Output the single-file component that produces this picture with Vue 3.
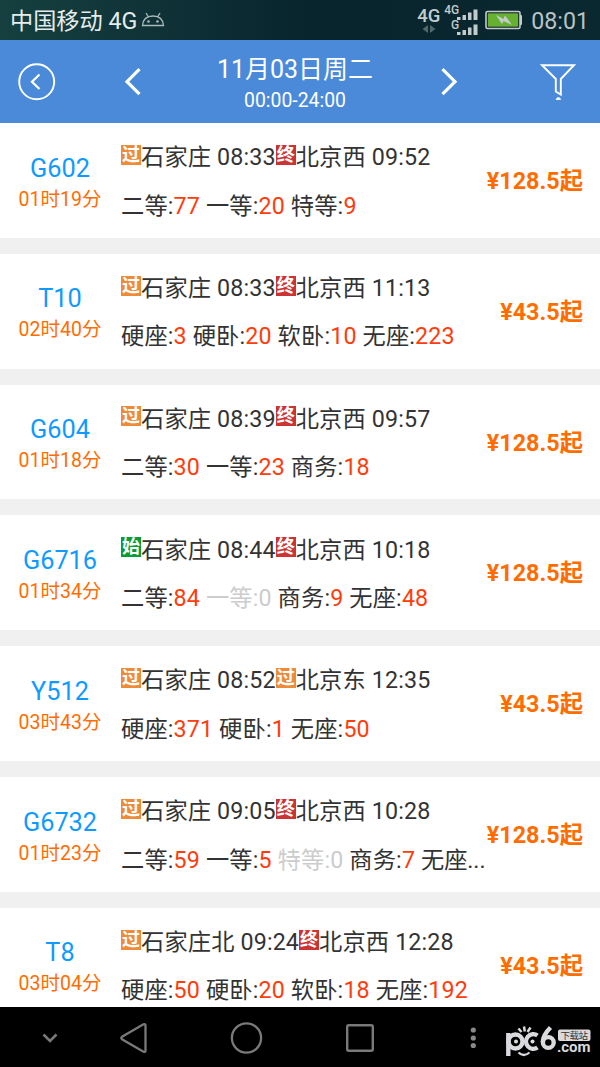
<template>
  <div class="app">
    <div class="status-bar">
      <span class="carrier">中国移动 4G</span>
      <svg class="android" width="24" height="16" viewBox="0 0 24 16">
        <path d="M1.500 13.500C2 7.500 6 4 12 4S22 7.500 22.500 13.500Z" />
        <path d="M5 1L7.500 5M19 1L16.500 5" />
        <circle cx="7.500" cy="9.500" r="0.700" />
        <circle cx="16.500" cy="9.500" r="0.700" />
      </svg>
      <div class="net">
        <span class="net-type">4G</span>
        <svg width="14" height="8" viewBox="0 0 14 8">
          <path d="M6 0V8L0.500 4ZM8 0V8L13.500 4Z" fill="#51686d" />
        </svg>
      </div>
      <div class="signals">
        <div class="signal" v-for="name in ['4G', 'G']" :key="name">
          <span>{{ name }}</span>
          <svg width="21" height="12" viewBox="0 0 21 12">
            <path d="M0 9h3.500v3H0ZM5.500 7H9v5H5.500ZM11 4.500h3.500V12H11ZM16.500 1.500H20.500V12H16.500Z" fill="#c3cccd" />
          </svg>
        </div>
      </div>
      <svg class="battery" width="38" height="20" viewBox="0 0 38 20">
        <rect x="1" y="1.500" width="34" height="17" rx="1.500" fill="#122126" stroke="#c3cccd" stroke-width="1.600" />
        <rect x="2.800" y="3.300" width="30.400" height="13.400" fill="#67b132" />
        <path d="M35.500 5.500H36.500V14.500H35.500Z" fill="#c3cccd" stroke="#c3cccd" />
        <path d="M11 5L18.500 9L20 5.500L27 15L18.500 11L17 14Z" fill="#c3cccd" />
      </svg>
      <span class="clock">08:01</span>
    </div>

    <div class="header">
      <button class="back">
        <svg width="38" height="38" viewBox="0 0 38 38">
          <circle cx="18.700" cy="18.700" r="17.500" stroke-width="1.900" />
          <path d="M21.500 11.500L14 18.800L21.500 26" stroke-width="2.300" />
        </svg>
      </button>
      <button class="prev">
        <svg width="20" height="30" viewBox="0 0 20 30">
          <path d="M16.500 2.200L4 14.700L16.500 27.200" stroke-width="3.200" />
        </svg>
      </button>
      <div class="date">
        <div class="day">11月03日周二</div>
        <div class="range">00:00-24:00</div>
      </div>
      <button class="next">
        <svg width="20" height="30" viewBox="0 0 20 30">
          <path d="M3.500 2.200L16 14.700L3.500 27.200" stroke-width="3.200" />
        </svg>
      </button>
      <button class="filter">
        <svg width="38" height="38" viewBox="0 0 38 38">
          <path d="M3 2.200H35L21.800 16V31.500L16.800 28.500V16Z" stroke-width="1.900" />
          <path d="M17.200 36.500C17.200 34 21.500 34 21.500 36.500Z" fill="#fff" stroke-width="0.800" />
        </svg>
      </button>
    </div>

    <div class="list">
      <div class="train" v-for="t in trains" :key="t.no">
        <div class="left">
          <div class="no">{{ t.no }}</div>
          <div class="duration">{{ t.duration }}</div>
        </div>
        <div class="info">
          <div class="stations">
            <i class="tag" :class="tagClass[t.from[0]]">{{ t.from[0] }}</i><span>{{ t.from[1] }}</span><i class="tag" :class="tagClass[t.to[0]]">{{ t.to[0] }}</i><span>{{ t.to[1] }}</span>
          </div>
          <div class="seats">
            <template v-for="s in t.seats" :key="s[0]"><span :class="{ none: s[1] === 0 }">{{ s[0] }}:<b>{{ s[1] }}</b></span>{{ ' ' }}</template>
            <span v-if="t.more" class="more">{{ t.more }}</span>
          </div>
        </div>
        <div class="price">¥{{ t.price }}起</div>
      </div>
    </div>

    <div class="nav-bar">
      <svg class="keys" width="490" height="60" viewBox="0 0 490 60">
        <path d="M43.500 27.500L50 34L56.500 27.500" stroke-width="2.600" />
        <path d="M122 29.800Q120.500 31 122 32.200L143.500 44.700Q145.500 45.500 145.500 43.500V18.500Q145.500 16.500 143.500 17.300Z" stroke-width="2.300" />
        <circle cx="246.500" cy="31" r="14.600" stroke-width="2.300" />
        <rect x="347.200" y="18.200" width="25.600" height="25.600" rx="1.500" stroke-width="2.400" />
        <g class="dots">
          <circle cx="473.300" cy="23" r="2.600" />
          <circle cx="473.300" cy="31" r="2.600" />
          <circle cx="473.300" cy="38.500" r="2.600" />
        </g>
      </svg>
      <svg class="logo" width="90" height="36" viewBox="0 0 90 36">
        <g fill="none" stroke="#d9d9de" stroke-width="4.400">
          <path d="M3.300 7V30" />
          <circle cx="10.500" cy="15.500" r="7" />
          <path d="M32.500 9.500A7.300 7.300 0 1 0 32.500 21.500" />
          <path d="M45.500 1.500C41 6 37.800 11 37.800 16" />
          <circle cx="43.300" cy="16.500" r="5.400" />
          <path d="M13.500 2.500L16.500 6M19 0.500L19.800 5.500M25.500 1.500L22.500 6" stroke-width="2.500" />
          <path d="M13.500 26.500Q18.500 31.500 24.500 26.500" stroke-width="2.200" />
        </g>
        <circle cx="11" cy="15.500" r="2" fill="#ddd" />
        <circle cx="27.500" cy="15.500" r="2" fill="#ddd" />
        <rect x="53" y="3.500" width="32.500" height="11.500" rx="2" fill="#d9d9de" />
        <text class="logo-cn" x="55.500" y="12.700" textLength="27.500">下载站</text>
        <text class="logo-com" x="52" y="25.500" textLength="33.500">.com</text>
      </svg>
    </div>
  </div>
</template>

<script setup>
import { ref } from 'vue';

const tagClass = { 过: 'pass', 终: 'end', 始: 'start' };

const trains = ref([
  {
    no: 'G602', duration: '01时19分', price: '128.5',
    from: ['过', '石家庄 08:33'], to: ['终', '北京西 09:52'],
    seats: [['二等', 77], ['一等', 20], ['特等', 9]],
  },
  {
    no: 'T10', duration: '02时40分', price: '43.5',
    from: ['过', '石家庄 08:33'], to: ['终', '北京西 11:13'],
    seats: [['硬座', 3], ['硬卧', 20], ['软卧', 10], ['无座', 223]],
  },
  {
    no: 'G604', duration: '01时18分', price: '128.5',
    from: ['过', '石家庄 08:39'], to: ['终', '北京西 09:57'],
    seats: [['二等', 30], ['一等', 23], ['商务', 18]],
  },
  {
    no: 'G6716', duration: '01时34分', price: '128.5',
    from: ['始', '石家庄 08:44'], to: ['终', '北京西 10:18'],
    seats: [['二等', 84], ['一等', 0], ['商务', 9], ['无座', 48]],
  },
  {
    no: 'Y512', duration: '03时43分', price: '43.5',
    from: ['过', '石家庄 08:52'], to: ['过', '北京东 12:35'],
    seats: [['硬座', 371], ['硬卧', 1], ['无座', 50]],
  },
  {
    no: 'G6732', duration: '01时23分', price: '128.5',
    from: ['过', '石家庄 09:05'], to: ['终', '北京西 10:28'],
    seats: [['二等', 59], ['一等', 5], ['特等', 0], ['商务', 7]],
    more: '无座...',
  },
  {
    no: 'T8', duration: '03时04分', price: '43.5',
    from: ['过', '石家庄北 09:24'], to: ['终', '北京西 12:28'],
    seats: [['硬座', 50], ['硬卧', 20], ['软卧', 18], ['无座', 192]],
  },
]);
</script>

<style>
body {
  margin: 0;
  overflow: hidden;
}
</style>

<style scoped>
.app {
  display: flex;
  flex-direction: column;
  width: 600px;
  height: 1067px;
  overflow: hidden;
  background: #f0f0f0;
  font-family: Roboto, "Noto Sans CJK SC", sans-serif;
  color: #333;
}

.status-bar {
  display: flex;
  flex: none;
  align-items: center;
  height: 40px;
  box-sizing: border-box;
  padding: 0 11px 0 10px;
  background: linear-gradient(90deg, #15403f 0%, #0e2f35 32%, #08242c 52%, #0a2830 100%);
}

.carrier {
  font-size: 23.2px;
  line-height: 40px;
  color: #e6ecec;
  padding-top: 2px;
}

.android {
  margin: -1px auto 0 4px;
  fill: none;
  stroke: #a9b8b9;
  stroke-width: 1.3;
}

.net {
  display: flex;
  flex-direction: column;
  align-items: center;
  margin-right: 4px;
}

.net-type {
  font-size: 18.5px;
  line-height: 18px;
  font-weight: 500;
  color: #c3cccd;
}

.signals {
  margin-right: 7px;
}

.signal {
  display: flex;
  justify-content: flex-end;
  align-items: flex-end;
  height: 15px;
}

.signal span {
  font-size: 12px;
  line-height: 19px;
  font-weight: 500;
  color: #c3cccd;
  margin-right: -2px;
}

.battery {
  margin-right: 8px;
}

.clock {
  font-size: 23.2px;
  line-height: 40px;
  color: #b9c3c5;
  padding-top: 2px;
}

.header {
  display: flex;
  flex: none;
  align-items: center;
  height: 83px;
  box-sizing: border-box;
  padding: 0 23px 0 18px;
  background: #4a8ad8;
  color: #fff;
}

.header button {
  display: flex;
  padding: 0;
  border: none;
  background: none;
}

.header svg {
  fill: none;
  stroke: #fff;
}

.prev {
  margin-left: 67px;
}

.next {
  margin-right: 80px;
}

.date {
  flex: 1;
  padding: 7px 0 0 8px;
  text-align: center;
}

.day {
  font-size: 25px;
  line-height: 32px;
}

.range {
  font-size: 19.4px;
  line-height: 30px;
}

.list {
  flex: 1;
  min-height: 0;
  overflow: hidden;
}

.train {
  display: flex;
  height: 114.8px;
  margin-bottom: 16px;
  background: #fff;
}

.left {
  width: 120px;
  flex: none;
  text-align: center;
  padding-top: 29.6px;
}

.no {
  font-size: 25.3px;
  line-height: 32px;
  color: #0f9aff;
}

.duration {
  font-size: 19.5px;
  line-height: 30px;
  color: #ff6c00;
}

.info {
  flex: none;
  width: 366px;
  padding: 12.8px 0 0 1px;
  box-sizing: border-box;
  font-size: 23.25px;
  letter-spacing: 0.14px;
  white-space: nowrap;
}

.stations {
  display: flex;
  align-items: center;
  height: 39px;
}

.tag {
  width: 20px;
  height: 20px;
  margin-top: -1px;
  font-size: 18px;
  line-height: 19px;
  letter-spacing: 0;
  font-style: normal;
  font-weight: bold;
  text-align: center;
  color: #fff;
}

.pass {
  background: #ed8b38;
}

.end {
  background: #cc3333;
}

.start {
  background: #069c38;
}

.seats {
  height: 42px;
  line-height: 42px;
  margin-top: 9.8px;
}

.seats b {
  font-weight: normal;
  color: #ff3c0c;
}

.seats .more {
  letter-spacing: -0.1px;
}

.seats .none,
.seats .none b {
  color: #ccc;
}

.price {
  flex: 1;
  padding-right: 17px;
  line-height: 117.4px;
  font-size: 23.35px;
  font-weight: bold;
  text-align: right;
  white-space: nowrap;
  color: #ff6c00;
}

.nav-bar {
  display: flex;
  flex: none;
  height: 60px;
  background: #000;
}

.keys {
  fill: none;
  stroke: #797979;
  margin-right: 14px;
}

.dots {
  fill: #888;
  stroke: none;
}

.logo {
  margin: 19px 0 0 1px;
  overflow: visible;
}

.logo-cn {
  font-size: 9.5px;
  fill: #333;
}

.logo-com {
  font-size: 15px;
  font-weight: bold;
  fill: #d9d9de;
}
</style>
